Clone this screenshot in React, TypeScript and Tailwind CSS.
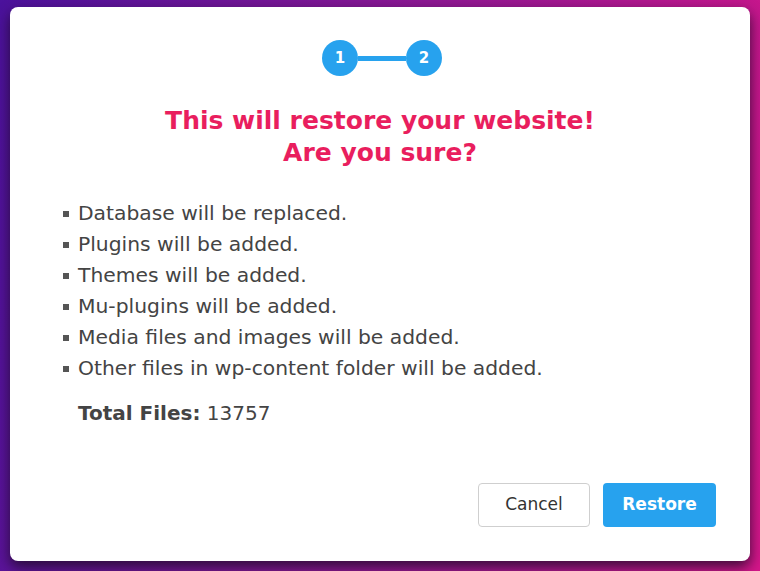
const items = [
  "Database will be replaced.",
  "Plugins will be added.",
  "Themes will be added.",
  "Mu-plugins will be added.",
  "Media files and images will be added.",
  "Other files in wp-content folder will be added.",
];

function Stepper() {
  return (
    <div className="flex items-center justify-center ml-1">
      <div className="w-9 h-9 rounded-full bg-[#27a2ee] flex items-center justify-center text-white text-[15px] font-bold">
        1
      </div>
      <div className="w-12 h-[5px] bg-[#27a2ee]" />
      <div className="w-9 h-9 rounded-full bg-[#27a2ee] flex items-center justify-center text-white text-[15px] font-bold">
        2
      </div>
    </div>
  );
}

export default function App() {
  return (
    <div
      className="w-[760px] h-[571px] pt-[7px] pl-[10px] bg-[linear-gradient(100deg,#4b129c_0%,#8e1894_50%,#d6168a_100%)]"
      style={{ fontFamily: '"DejaVu Sans", Verdana, sans-serif' }}
    >
      <div className="w-[740px] h-[554px] bg-white rounded-lg shadow-[0_6px_14px_rgba(30,10,40,0.85)] flex flex-col px-[34px] pt-[33px] pb-[34px]">
        <Stepper />

        <h1 className="mt-[29px] text-center text-[#e91e5e] text-[25px] leading-[32px] font-bold">
          This will restore your website!
          <br />
          Are you sure?
        </h1>

        <ul className="mt-[29px] pl-[19px] flex flex-col text-[#444] text-[20.3px] leading-[31px]">
          {items.map((t) => (
            <li key={t} className="flex items-center">
              <span className="w-[6px] h-[6px] bg-[#555] mr-[9px]" />
              {t}
            </li>
          ))}
        </ul>

        <p className="mt-[14px] pl-[34px] text-[#444] text-[20px] leading-[31px]">
          <span className="font-bold">Total Files:</span> 13757
        </p>

        <div className="mt-auto flex justify-end gap-[13px]">
          <button className="w-[112px] h-[44px] rounded border border-[#cfcfcf] bg-white text-[#333] text-[17px]">
            Cancel
          </button>
          <button className="w-[113px] h-[44px] rounded bg-[#27a2ee] text-white text-[17px] font-bold">
            Restore
          </button>
        </div>
      </div>
    </div>
  );
}
